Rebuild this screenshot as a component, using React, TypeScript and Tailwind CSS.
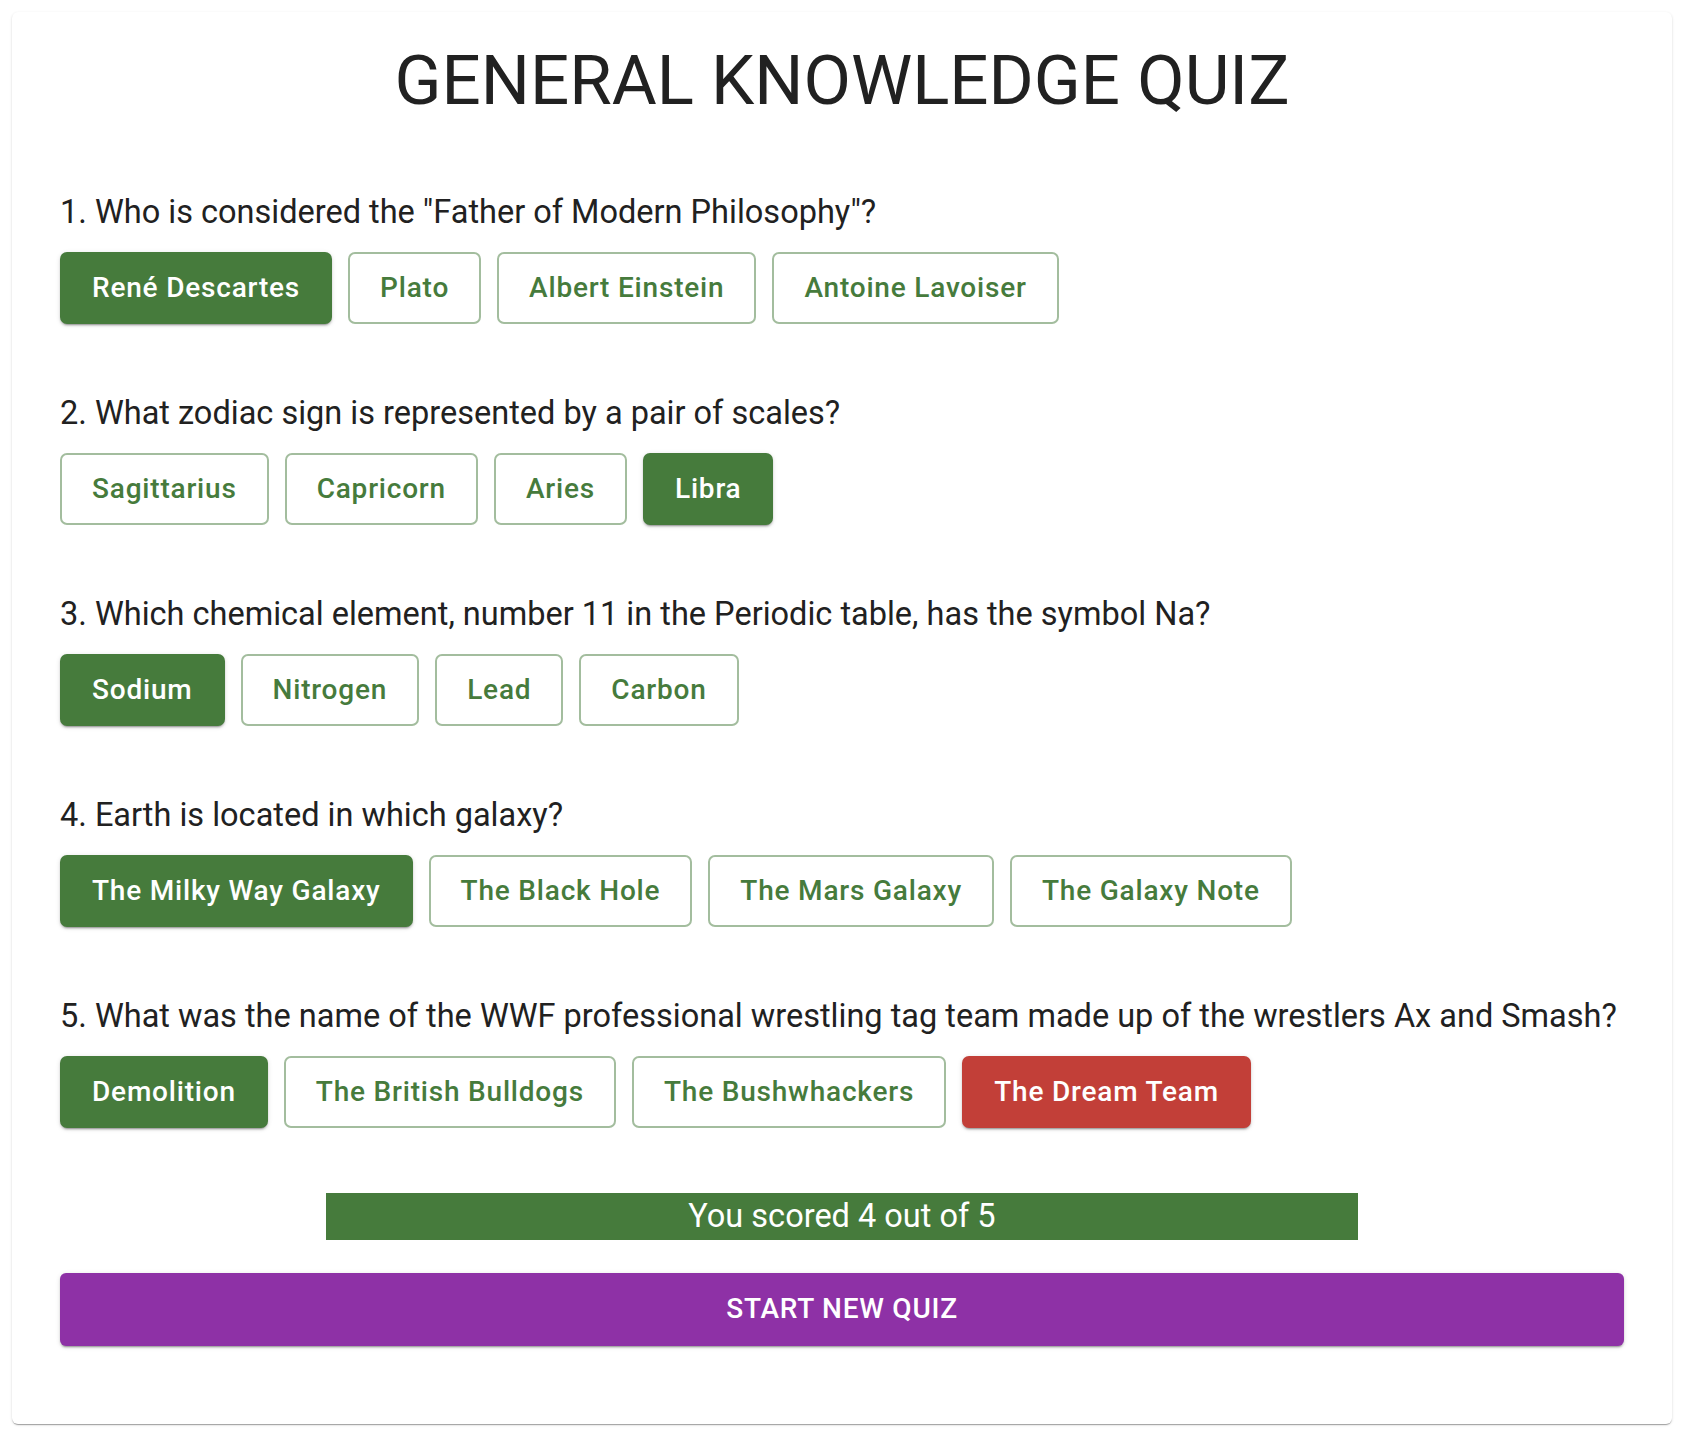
import React from "react";

type Question = {
  text: string;
  answers: string[];
  picked: string;
  correct: string;
};

const questions: Question[] = [
  {
    text: '1. Who is considered the "Father of Modern Philosophy"?',
    answers: ["René Descartes", "Plato", "Albert Einstein", "Antoine Lavoiser"],
    picked: "René Descartes",
    correct: "René Descartes",
  },
  {
    text: "2. What zodiac sign is represented by a pair of scales?",
    answers: ["Sagittarius", "Capricorn", "Aries", "Libra"],
    picked: "Libra",
    correct: "Libra",
  },
  {
    text: "3. Which chemical element, number 11 in the Periodic table, has the symbol Na?",
    answers: ["Sodium", "Nitrogen", "Lead", "Carbon"],
    picked: "Sodium",
    correct: "Sodium",
  },
  {
    text: "4. Earth is located in which galaxy?",
    answers: ["The Milky Way Galaxy", "The Black Hole", "The Mars Galaxy", "The Galaxy Note"],
    picked: "The Milky Way Galaxy",
    correct: "The Milky Way Galaxy",
  },
  {
    text: "5. What was the name of the WWF professional wrestling tag team made up of the wrestlers Ax and Smash?",
    answers: ["Demolition", "The British Bulldogs", "The Bushwhackers", "The Dream Team"],
    picked: "The Dream Team",
    correct: "Demolition",
  },
];

const AnswerButton = ({ label, q }: { label: string; q: Question }) => {
  const isCorrect = label === q.correct;
  const isWrongPick = label === q.picked && label !== q.correct;

  if (isCorrect) {
    return (
      <button className="h-[72px] px-8 rounded-[7px] bg-[#467b3c] text-white text-[28px] font-medium tracking-[0.8px] shadow-[0_3px_1px_-2px_rgba(0,0,0,0.2),0_2px_2px_0_rgba(0,0,0,0.14),0_1px_5px_0_rgba(0,0,0,0.12)]">
        {label}
      </button>
    );
  }
  if (isWrongPick) {
    return (
      <button className="h-[72px] px-8 rounded-[7px] bg-[#c23f38] text-white text-[28px] font-medium tracking-[0.8px] shadow-[0_3px_1px_-2px_rgba(0,0,0,0.2),0_2px_2px_0_rgba(0,0,0,0.14),0_1px_5px_0_rgba(0,0,0,0.12)]">
        {label}
      </button>
    );
  }
  return (
    <button className="h-[72px] px-[30px] rounded-[7px] border-2 border-[#a3bd9e] bg-white text-[#467b3c] text-[28px] font-medium tracking-[0.8px]">
      {label}
    </button>
  );
};

export default function App() {
  return (
    <div className="min-h-screen bg-white p-3 font-['Roboto',sans-serif]">
      <div className="rounded-md bg-white px-12 pt-[28px] pb-[78px] shadow-[0_2px_1px_-1px_rgba(0,0,0,0.2),0_1px_1px_0_rgba(0,0,0,0.14),0_1px_3px_0_rgba(0,0,0,0.12)]">
        <h1 className="text-center text-[69px] leading-[1.2] text-[#212121]">
          GENERAL KNOWLEDGE QUIZ
        </h1>

        {questions.map((q) => (
          <div key={q.text} className="mt-[71px]">
            <p className="text-[32.5px] leading-[36px] text-[#212121]">{q.text}</p>
            <div className="mt-[22px] flex gap-4">
              {q.answers.map((a) => (
                <AnswerButton key={a} label={a} q={q} />
              ))}
            </div>
          </div>
        ))}

        <div className="mt-[65px] flex justify-center">
          <div className="w-[66%] h-[47px] bg-[#467b3c] flex items-center justify-center text-white text-[32.5px]">
            You scored 4 out of 5
          </div>
        </div>

        <button className="mt-[33px] w-full h-[73px] rounded-md bg-[#8e31a6] text-white text-[28px] font-medium uppercase tracking-[0.75px] shadow-[0_3px_1px_-2px_rgba(0,0,0,0.2),0_2px_2px_0_rgba(0,0,0,0.14),0_1px_5px_0_rgba(0,0,0,0.12)]">
          Start new quiz
        </button>
      </div>
    </div>
  );
}
